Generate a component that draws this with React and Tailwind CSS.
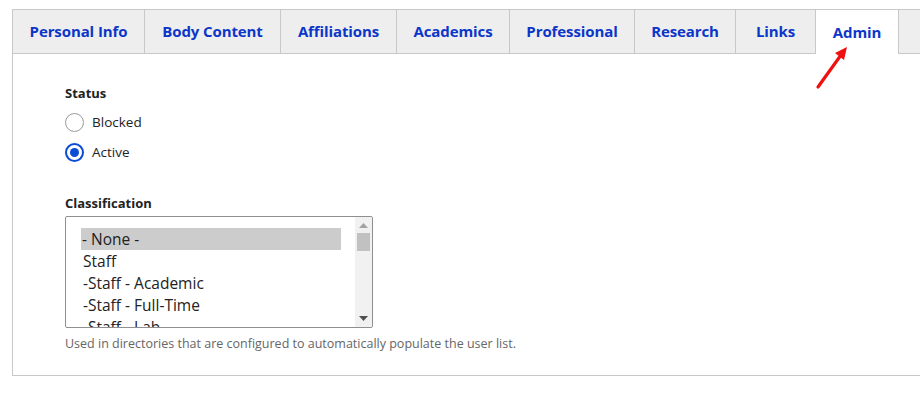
import { useState } from 'react'

const tabs = [
  { label: 'Personal Info', w: 'w-[132px]' },
  { label: 'Body Content', w: 'w-[136px]' },
  { label: 'Affiliations', w: 'w-[116px]' },
  { label: 'Academics', w: 'w-[113px]' },
  { label: 'Professional', w: 'w-[125px]' },
  { label: 'Research', w: 'w-[101px]' },
  { label: 'Links', w: 'w-[80px]' },
  { label: 'Admin', w: 'w-[83px]' }
]

const options = ['- None -', 'Staff', '-Staff - Academic', '-Staff - Full-Time', '-Staff - Lab']

const Radio = ({ checked, label, onClick }) => (
  <button onClick={onClick} className="flex items-center gap-[8px] h-[30px]">
    {checked ? (
      <span className="w-[19px] h-[19px] rounded-full border-[2px] border-[#0b4cd4] flex items-center justify-center">
        <span className="w-[9px] h-[9px] rounded-full bg-[#0b4cd4]" />
      </span>
    ) : (
      <span className="w-[19px] h-[19px] rounded-full border border-[#9a9a9a] bg-white" />
    )}
    <span className="text-[13.5px] text-[#222]">{label}</span>
  </button>
)

export default function App() {
  const [status, setStatus] = useState('active')
  const [active, setActive] = useState('Admin')

  return (
    <div className="w-[920px] h-[399px] bg-white pt-[9px] pl-[12px] overflow-hidden font-['Open_Sans',sans-serif]">
      <div className="border-l border-b border-[#c8c8c8] w-[920px] h-[367px] flex flex-col">
        {/* Tabs */}
        <div className="flex h-[45px] shrink-0">
          {tabs.map((t) => {
            const isActive = t.label === active
            return (
              <button
                key={t.label}
                onClick={() => setActive(t.label)}
                className={`${t.w} h-[45px] border-t border-r border-[#c8c8c8] text-[15px] font-bold text-[#0c36c9] tracking-[-0.1px] ${
                  isActive ? 'bg-white' : 'bg-[#eeeeee] border-b'
                }`}
              >
                {t.label}
              </button>
            )
          })}
          <div className="flex-1 h-[45px] bg-[#eeeeee] border-t border-b border-[#c8c8c8]" />
        </div>

        {/* Panel */}
        <div className="relative flex-1 pl-[52px] pt-[29px]">
          {/* annotation arrow */}
          <svg className="absolute left-[800px] top-[-9px]" width="40" height="48" viewBox="0 0 40 48">
            <line x1="5" y1="42" x2="28" y2="10" stroke="#f01010" strokeWidth="3.2" strokeLinecap="round" />
            <polygon points="34,2 22,8 31,15" fill="#f01010" />
          </svg>

          <div className="text-[13px] font-bold text-[#222] leading-[20px]">Status</div>
          <div className="mt-[4px] flex flex-col">
            <Radio checked={status === 'blocked'} label="Blocked" onClick={() => setStatus('blocked')} />
            <Radio checked={status === 'active'} label="Active" onClick={() => setStatus('active')} />
          </div>

          <div className="mt-[26px] text-[13px] font-bold text-[#222] leading-[20px]">Classification</div>
          <div className="mt-[3px] w-[308px] h-[112px] border border-[#8f8f8f] rounded-[2px] flex overflow-hidden">
            <div className="flex-1 pl-[15px] pt-[11px] pr-[14px] overflow-hidden">
              {options.map((o, i) => (
                <div
                  key={o}
                  className={`h-[22px] leading-[22px] text-[15.5px] text-[#222] ${i === 0 ? 'bg-[#cccccc] pl-[1px]' : 'pl-[2px]'}`}
                >
                  {o}
                </div>
              ))}
            </div>
            <div className="w-[17px] bg-[#f1f1f1] flex flex-col items-center justify-between py-[6px]">
              <div className="flex flex-col items-center w-full">
                <svg width="9" height="5" viewBox="0 0 9 5"><polygon points="4.5,0 9,5 0,5" fill="#a3a3a3" /></svg>
                <div className="mt-[5px] w-[13px] h-[18px] bg-[#c1c1c1]" />
              </div>
              <svg width="9" height="5" viewBox="0 0 9 5"><polygon points="0,0 9,0 4.5,5" fill="#505050" /></svg>
            </div>
          </div>
          <div className="mt-[8px] text-[12.5px] text-[#666] leading-[16px]">
            Used in directories that are configured to automatically populate the user list.
          </div>
        </div>
      </div>
    </div>
  )
}
